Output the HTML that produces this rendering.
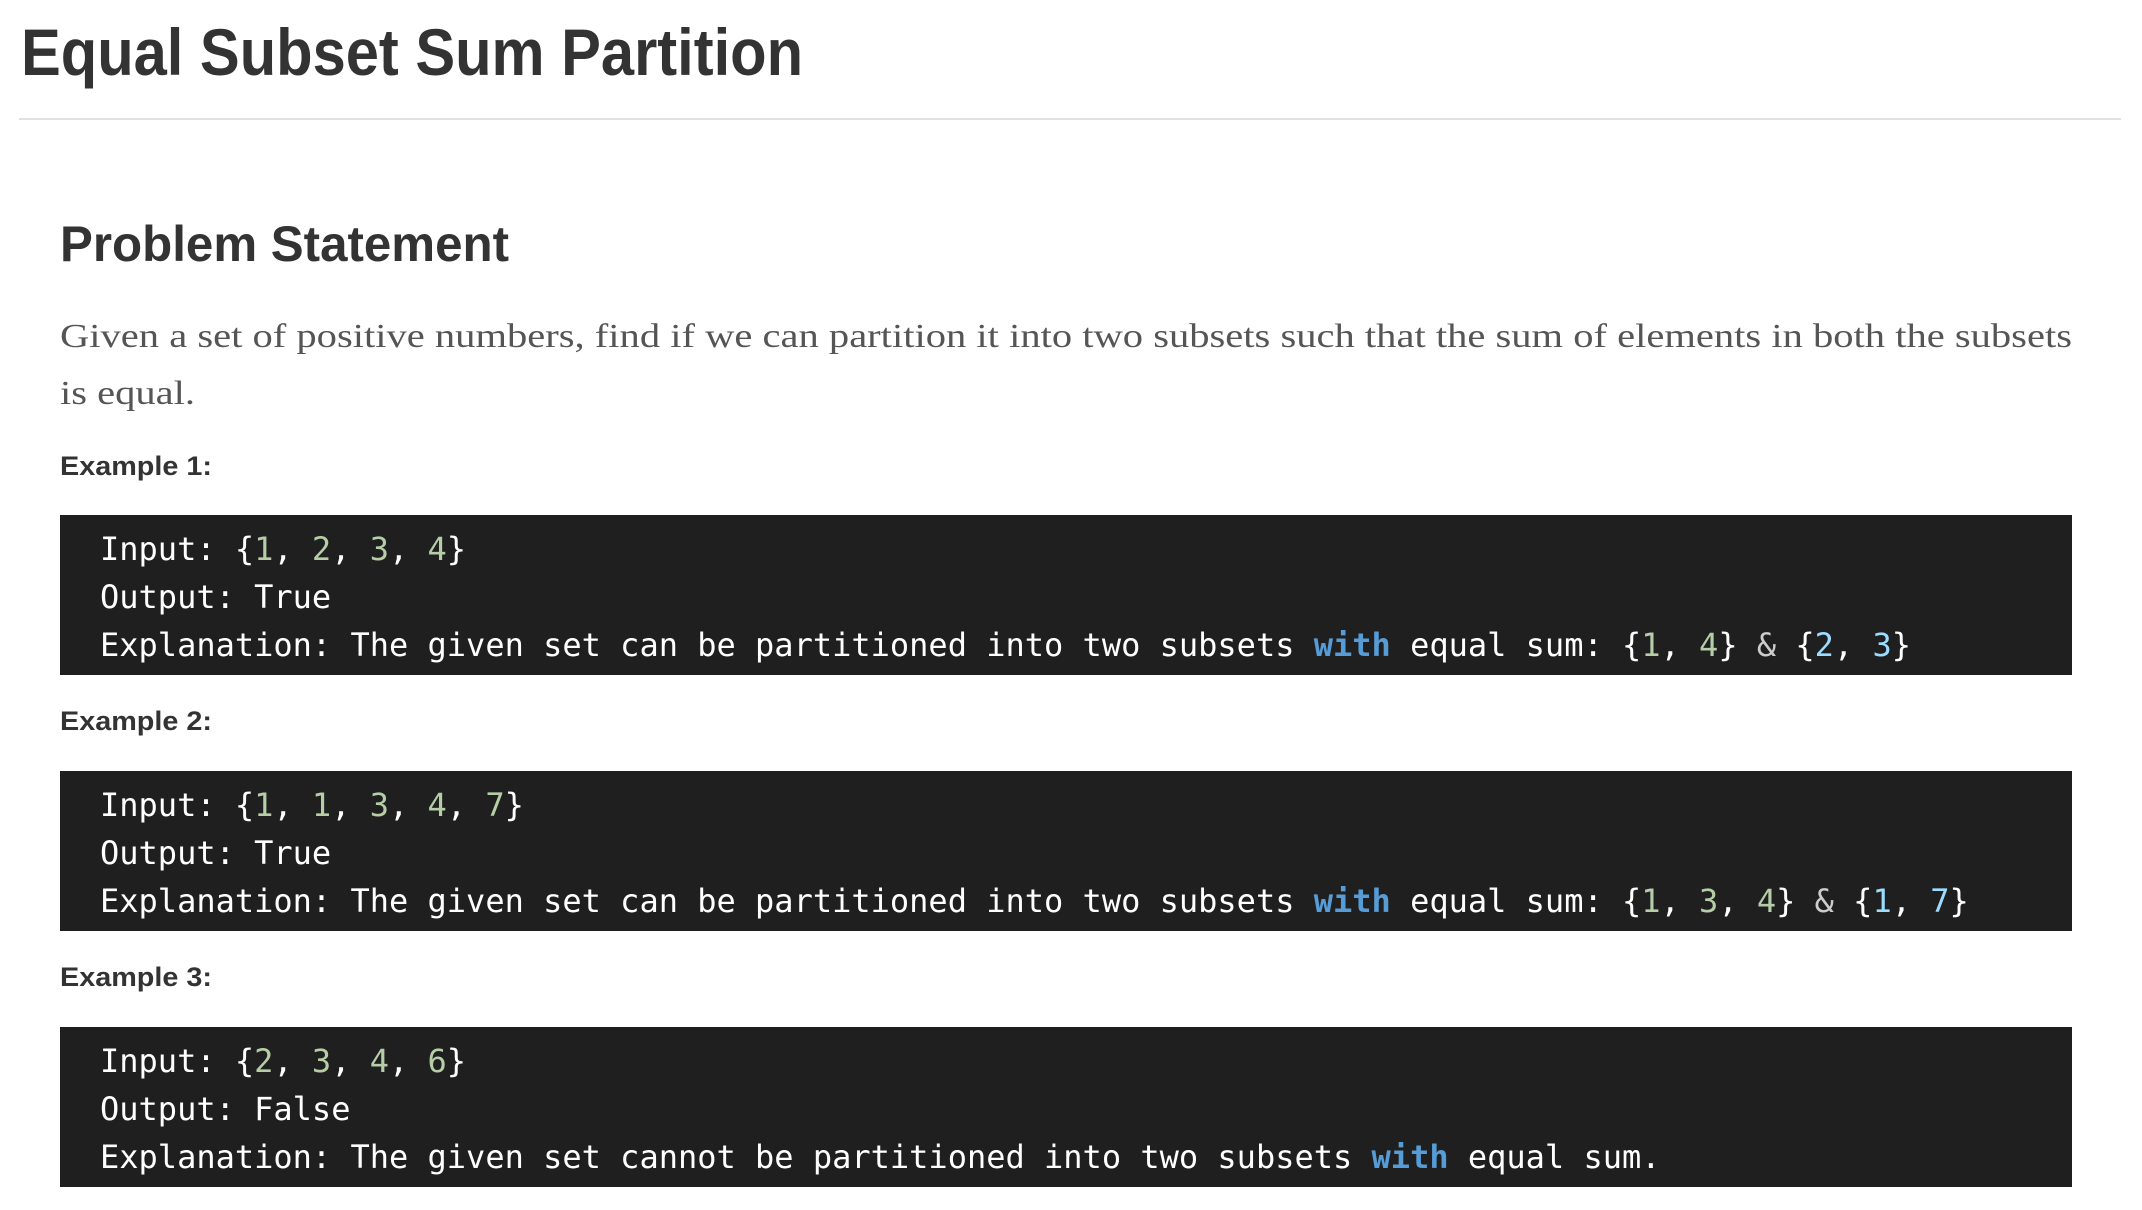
<!DOCTYPE html>
<html><head><meta charset="utf-8"><style>
html,body{margin:0;padding:0;background:#fff;width:2142px;height:1210px;overflow:hidden;position:relative}
svg.t{position:absolute;left:0;top:0}
.code{position:absolute;left:60px;width:2012px;height:160px;background:#1f1f1f;box-sizing:border-box;padding:10px 0 0 40px;font-family:"DejaVu Sans Mono","Liberation Mono",monospace;font-size:32px;line-height:48px;color:#fff;white-space:pre}
.n{color:#b5cea8}.b{color:#9cdcfe}.k{color:#569cd6;font-weight:bold}.a{color:#ccc}
</style></head><body>
<svg class="t" width="2142" height="1210">
<text x="21" y="75" font-family="Liberation Sans, sans-serif" font-weight="bold" font-size="66" fill="#333" textLength="782" lengthAdjust="spacingAndGlyphs">Equal Subset Sum Partition</text>
<rect x="19" y="118" width="2102" height="2" fill="#e0e0e0"/>
<text x="60" y="261" font-family="Liberation Sans, sans-serif" font-weight="bold" font-size="50" fill="#333" textLength="449" lengthAdjust="spacingAndGlyphs">Problem Statement</text>
<text x="60" y="347" font-family="Liberation Serif, serif" font-size="34" fill="#555" textLength="2012" lengthAdjust="spacingAndGlyphs">Given a set of positive numbers, find if we can partition it into two subsets such that the sum of elements in both the subsets</text>
<text x="60" y="404" font-family="Liberation Serif, serif" font-size="34" fill="#555" textLength="135" lengthAdjust="spacingAndGlyphs">is equal.</text>
<text x="60" y="475" font-family="Liberation Sans, sans-serif" font-weight="bold" font-size="27" fill="#333" textLength="152" lengthAdjust="spacingAndGlyphs">Example 1:</text>
<text x="60" y="730" font-family="Liberation Sans, sans-serif" font-weight="bold" font-size="27" fill="#333" textLength="152" lengthAdjust="spacingAndGlyphs">Example 2:</text>
<text x="60" y="986" font-family="Liberation Sans, sans-serif" font-weight="bold" font-size="27" fill="#333" textLength="152" lengthAdjust="spacingAndGlyphs">Example 3:</text>
</svg>
<div class="code" style="top:515px">Input: {<span class="n">1</span>, <span class="n">2</span>, <span class="n">3</span>, <span class="n">4</span>}
Output: True
Explanation: The given set can be partitioned into two subsets <span class="k">with</span> equal sum: {<span class="n">1</span>, <span class="n">4</span>} <span class="a">&amp;</span> {<span class="b">2</span>, <span class="b">3</span>}</div>
<div class="code" style="top:771px">Input: {<span class="n">1</span>, <span class="n">1</span>, <span class="n">3</span>, <span class="n">4</span>, <span class="n">7</span>}
Output: True
Explanation: The given set can be partitioned into two subsets <span class="k">with</span> equal sum: {<span class="n">1</span>, <span class="n">3</span>, <span class="n">4</span>} <span class="a">&amp;</span> {<span class="b">1</span>, <span class="b">7</span>}</div>
<div class="code" style="top:1027px">Input: {<span class="n">2</span>, <span class="n">3</span>, <span class="n">4</span>, <span class="n">6</span>}
Output: False
Explanation: The given set cannot be partitioned into two subsets <span class="k">with</span> equal sum.</div>
</body></html>
